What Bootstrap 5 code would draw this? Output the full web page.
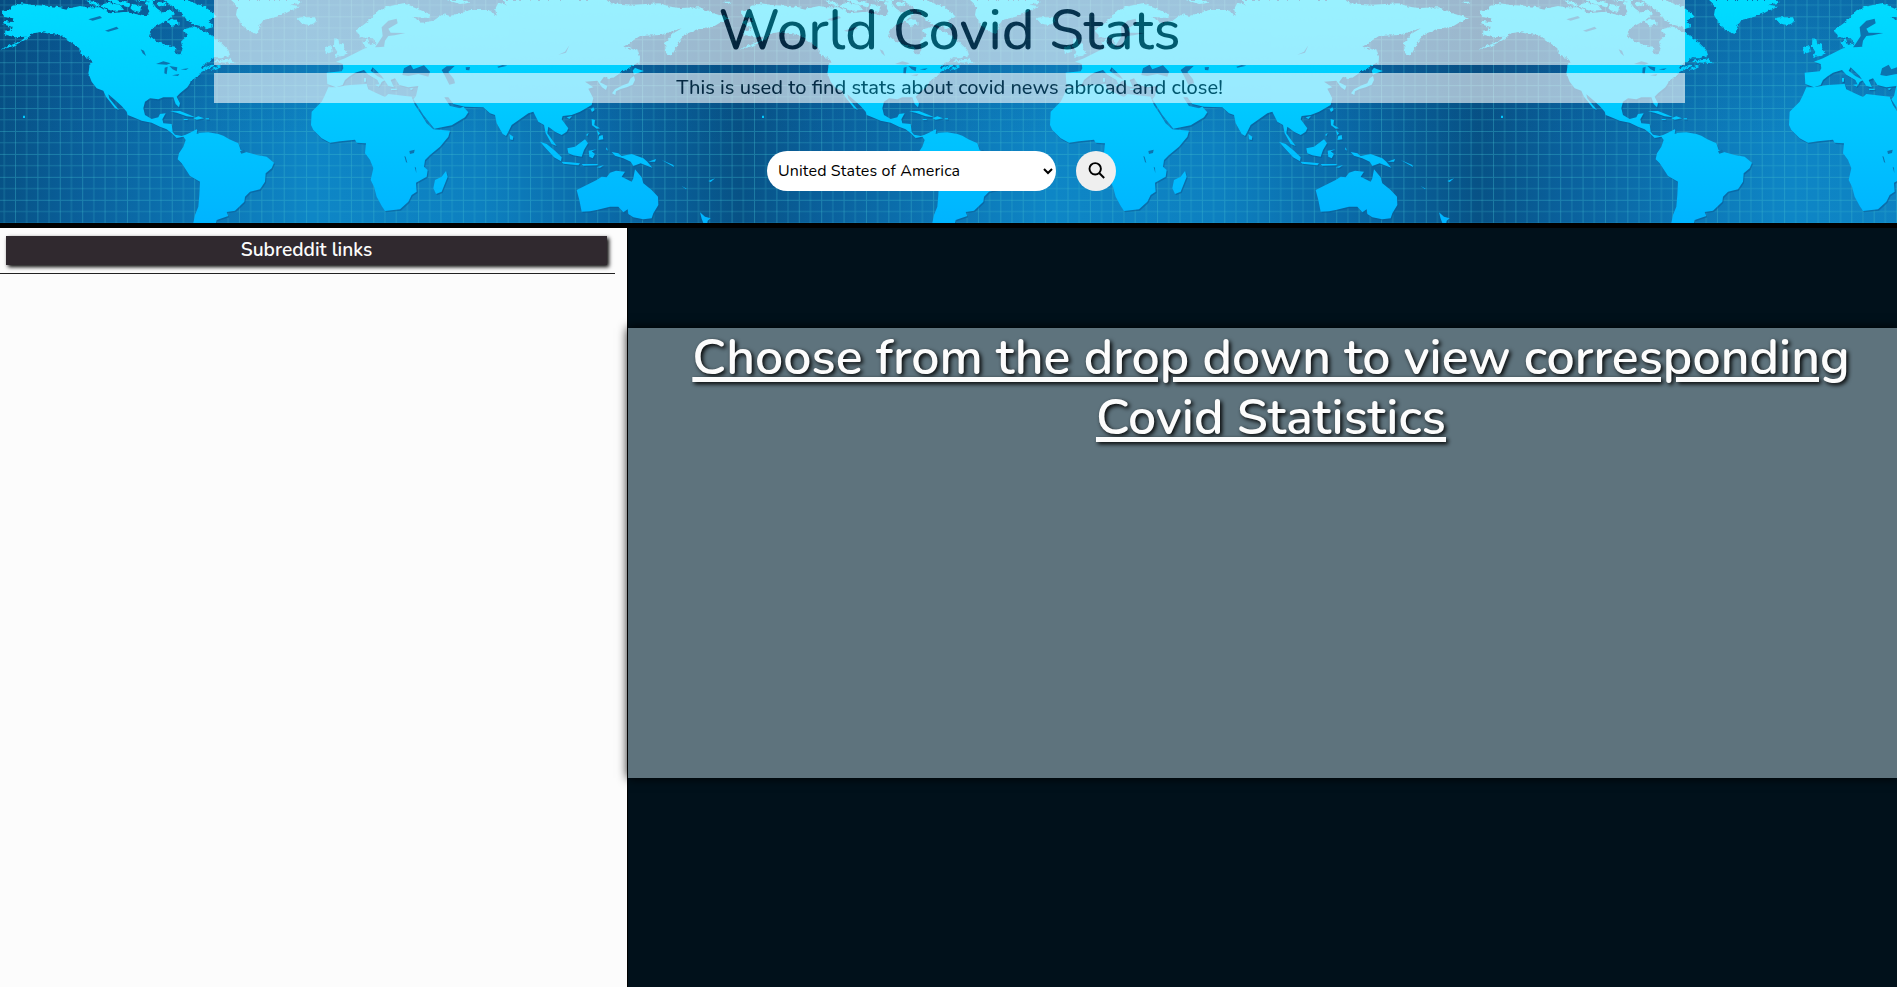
<!DOCTYPE html>
<html lang="en">
<head>
<meta charset="utf-8">
<title>World Covid Stats</title>
<meta name="viewport" content="width=device-width, initial-scale=1">
<link href="https://cdn.jsdelivr.net/npm/bootstrap@5.3.0/dist/css/bootstrap.min.css" rel="stylesheet">
<style>
body{font-family:Nunito,Lato,sans-serif;background:#01111b;color:#020a10;height:987px}
.site-header{height:228px;border-bottom:5px solid #000}
.map-bg{z-index:0}
.header-content{z-index:1;width:1471px;margin-left:214px}
.site-title{font-size:56px;line-height:62px;height:65px;margin:0 0 8px;font-weight:500;background:#fff;opacity:.6}
.tagline{font-size:20px;line-height:30px;height:30px;font-weight:500;background:#fff;opacity:.6}
.search-row{margin-top:48px;padding-left:553px;gap:20px}
.country{width:289px;height:40px;border:0;border-radius:20px;padding-left:7px;background:#fff;color:#000;font-size:16px;letter-spacing:.13px}
.search-btn{width:40px;height:40px;background:#efefef}
.side{width:627px;background:#fcfcfc;padding-top:8px}
.side-title{width:601px;height:29px;margin-left:6px;background:#30292f;color:#fcfcfc;font-size:19.2px;line-height:28px;font-weight:600;box-shadow:2px 2px 4px #000}
.side-rule{width:615px;height:1px;background:#222;margin-top:8px}
.main-pane{border-left:1px solid #000;padding-top:100px}
.stats{height:450px;background:#5e737d;box-shadow:0 0 10px #000;padding-left:17px}
.stats h2{font-size:50px;line-height:60px;font-weight:600;color:#fcfcfc;text-shadow:2px 2px 4px #000;text-decoration:underline;text-decoration-thickness:5px;text-underline-offset:3px}
</style>
</head>
<body class="d-flex flex-column overflow-hidden">
<header class="site-header position-relative flex-shrink-0">
<svg class="map-bg position-absolute top-0 start-0" width="1897" height="223" viewBox="0 0 5691 669">
<defs>
<linearGradient id="sea"><stop offset="0" stop-color="#075286"/><stop offset=".12" stop-color="#0a619d"/><stop offset=".28" stop-color="#0c76b5"/><stop offset=".42" stop-color="#0e86c6"/><stop offset=".65" stop-color="#0d80c0"/><stop offset=".82" stop-color="#0a6aa8"/><stop offset="1" stop-color="#075286"/></linearGradient>
<linearGradient id="shade" x2="0" y2="1"><stop offset="0" stop-color="#083c74" stop-opacity=".32"/><stop offset=".65" stop-color="#083c74" stop-opacity="0"/></linearGradient>
<linearGradient id="land" gradientUnits="userSpaceOnUse" x1="0" y1="0" x2="0" y2="669"><stop offset="0" stop-color="#00dcff"/><stop offset="1" stop-color="#00b4ff"/></linearGradient>
<pattern id="grid" x="45" y="49" width="67.18" height="68.8" patternUnits="userSpaceOnUse"><path d="M0 1.5H68M1.5 0V69" stroke="#3fc0d0" stroke-width="3" stroke-opacity=".36"/><path d="M0 35.5H68M35 0V69" stroke="#3fc0d0" stroke-width="3" stroke-opacity=".28"/></pattern>
<filter id="rough" x="-2%" y="-5%" width="104%" height="110%"><feTurbulence type="fractalNoise" baseFrequency=".09" numOctaves="3" seed="4"/><feDisplacementMap in="SourceGraphic" scale="12" xChannelSelector="R" yChannelSelector="G"/></filter>
<g id="north">
<path d="M5 32L30 28 38 18 65 10 100 15 150 18 180 22 200 26 240 18 262 22 300 22 330 40 370 36 400 40 430 48 450 42 445 25 436 8 455 5 470 25 490 38 510 28 525 42 505 58 475 75 455 85 447 105 470 125 500 135 525 140 527 158 540 165 548 145 543 125 560 108 552 88 575 82 600 88 625 100 642 112 660 125 685 150 690 165 665 175 640 175 612 192 600 208 635 194 650 196 605 215 598 225 575 240 400 250 267 226 268 195 278 188 262 172 240 160 238 145 215 128 195 115 180 105 150 102 125 96 100 100 75 120 40 138 2 150 30 135 60 125 78 110 45 112 20 105 10 95 32 92 35 80 5 72 15 63 38 66 40 55 8 50Z"/>
<path d="M255 0L290 8 302 18 282 16ZM300 15L325 8 360 15 372 30 340 32 312 26ZM320 0H350L390 10 384 22 350 12ZM395 12L425 18 420 36 395 30ZM400 0H470L455 6ZM470 5L500 8 490 22 475 18ZM490 0H560L590 12 615 20 640 40 650 50 625 62 640 78 620 84 580 72 560 60 548 42 520 20ZM500 62L525 58 540 72 515 78ZM640 185L665 178 690 176 705 190 680 188ZM655 198L668 196 645 208 630 210Z"/>
<path d="M690 0L712 20 708 45 725 75 745 92 770 102 778 80 790 60 830 50 860 38 900 18 870 14 905 8 895 0ZM890 54L905 52 945 52 950 65 925 76 905 70Z"/>
<path d="M1070 90L1110 60 1130 35 1160 20 1210 10 1240 22 1290 42 1285 54 1240 50 1265 68 1300 62 1330 42 1350 48 1410 30 1470 30 1482 46 1492 50 1485 28 1495 8 1520 14 1510 0H1820L1830 10 1900 14 1980 10 2010 20 2040 24 2100 22 2140 40 2190 55 2165 65 2140 80 2100 85 2060 100 2035 130 2015 167 1998 160 1995 130 2020 100 2045 85 1980 105 1920 108 1870 140 1910 150 1918 185 1860 220 1830 235 1810 230 1600 270 1250 230 1200 180 1170 150 1150 138 1120 148 1095 145 1090 125 1103 118 1110 135 1130 130 1115 115 1080 112ZM1340 0H1395L1412 8 1380 12ZM1003 115L1015 118 1018 130 1030 135 1035 152 1045 160 1030 168 1005 170 1012 155 1002 140ZM975 140L995 135 998 155 978 162ZM2170 5H2195L2185 12ZM1912 146L1920 170 1918 192 1910 180Z"/>
</g>
<g id="south">
<path d="M268 205L595 205 598 225 575 235 570 250 562 262 540 280 530 290 540 310 537 322 527 312 520 292 490 292 475 298 450 295 435 305 430 325 435 345 455 357 475 352 480 342 497 340 487 358 490 370 515 372 518 395 525 404 545 408 557 404 570 398 590 388 597 398 625 397 655 402 670 407 688 418 715 430 722 450 735 455 770 465 800 470 822 488 815 505 797 520 795 545 780 568 750 575 735 590 733 605 705 632 680 636 685 648 650 660 648 669H580L585 645 595 620 598 585 600 545 570 528 545 490 533 478 537 460 550 440 557 420 550 410 530 414 515 400 500 388 480 380 455 368 425 362 400 352 383 345 380 335 365 318 345 300 325 283 328 295 342 312 357 330 345 325 330 305 318 290 310 272 290 265 275 245 265 220Z"/>
<path d="M510 334L540 333 570 345 585 352 560 349 530 338ZM580 355L595 349 612 355 590 359ZM551 357H563V360H551ZM617 355H627V358H617ZM69 347H75V354H69Z"/>
<path d="M985 262L1005 262 1050 255 1100 252 1105 268 1130 280 1155 291 1165 282 1235 290 1245 315 1265 345 1280 370 1300 388 1350 392 1345 410 1320 440 1290 465 1275 480 1272 500 1283 510 1280 530 1248 548 1250 575 1235 585 1225 605 1200 628 1155 633 1145 618 1130 590 1122 560 1112 540 1120 505 1110 480 1095 460 1098 430 1070 428 1065 419 1020 424 990 428 965 415 940 390 933 375 935 335 950 320 965 305 975 285ZM1338 513L1343 530 1325 575 1308 582 1300 565 1305 540 1325 530Z"/>
<path d="M980 218L1025 214 1030 205 1028 192 1008 185 1035 175 1065 160 1095 145 1150 140 1300 120 1860 200 1860 220 1840 233 1812 230 1800 247 1822 258 1818 270 1806 262 1792 242 1755 245 1780 262 1765 266 1780 295 1775 315 1740 335 1715 345 1688 348 1685 358 1705 385 1700 395 1685 405 1665 395 1645 380 1642 400 1670 438 1655 432 1637 400 1632 375 1615 365 1600 335 1585 340 1535 375 1525 395 1518 408 1508 402 1490 370 1485 345 1470 340 1450 322 1395 320 1360 312 1345 292 1333 292 1350 318 1380 325 1390 320 1405 337 1395 352 1355 376 1303 386 1270 345 1240 298 1248 288 1255 258 1225 262 1198 255 1185 235 1172 240 1182 262 1165 258 1145 228 1118 202 1112 212 1132 228 1155 240 1145 246 1140 256 1132 240 1105 224 1092 210 1065 218 1050 228 1035 240 1028 255 1008 262 982 252Z"/>
<path d="M1125 254L1140 253 1136 260ZM1092 234H1098V245H1092ZM1173 266H1190V270H1173ZM1228 266L1240 263 1234 270ZM1528 402L1540 410 1538 420 1530 418ZM1700 352L1716 348 1708 357ZM1780 322L1784 330 1776 336 1772 328Z"/>
<path d="M1905 203L1915 208 1932 213 1912 220 1902 224 1898 212ZM1902 228L1905 240 1898 254 1880 262 1862 267 1848 274 1846 285 1836 280 1845 268 1870 255 1885 250 1892 235ZM1775 357L1785 360 1783 375 1800 385 1790 386 1776 376ZM1790 390L1800 400 1795 406ZM1798 408L1808 405 1810 418 1795 420ZM1758 405L1766 398 1762 408Z"/>
<path d="M1620 425L1640 432 1665 452 1685 472 1683 484 1662 472 1640 448ZM1684 485L1710 487 1740 490 1735 496 1690 491ZM1745 492L1795 492 1790 496 1750 497ZM1790 502L1812 495 1800 503ZM1702 445L1725 440 1755 418 1764 430 1752 450 1745 470 1720 466 1705 460ZM1766 452L1790 448 1775 454 1785 462 1778 475 1768 470ZM1820 442L1824 452 1818 448ZM1835 456L1855 460 1865 468 1895 462 1930 475 1942 485 1957 503 1935 495 1922 490 1900 498 1892 485 1870 475 1845 467ZM1945 485L1968 477 1965 485ZM1985 480L2020 495 2022 501ZM2045 558L2060 566 2058 568ZM2125 543L2145 535 2132 546ZM2100 637L2115 650 2132 655 2123 662 2122 669H2110L2105 656Z"/>
<path d="M1730 570L1760 555 1790 540 1805 530 1820 532 1830 518 1848 512 1875 515 1865 530 1895 545 1900 535 1905 508 1915 520 1925 532 1930 550 1955 570 1974 590 1975 615 1960 640 1955 655 1930 658 1900 652 1885 642 1883 628 1870 637 1855 620 1830 620 1790 630 1770 634 1745 635 1738 600Z"/>
</g>
<g id="lakes">
<path d="M468 192L490 184 512 190 500 194ZM494 203L503 200 500 223 493 220ZM508 198L532 202 530 214 518 208ZM516 226L538 222 534 228ZM542 208L566 205 558 210ZM265 58L300 48 306 54 278 62ZM315 92L350 80 356 86 325 95ZM422 148L432 152 438 168 428 160Z"/>
<path d="M1207 225L1212 205 1232 194 1240 208 1272 196 1290 215 1285 230 1255 222 1225 228ZM1325 210L1340 199 1364 198 1345 216 1362 238 1365 250 1348 254 1335 228ZM1397 202L1410 201 1408 211 1398 210ZM1492 200L1508 195 1522 197 1495 203ZM1675 164L1695 155 1708 136 1698 158ZM1228 453L1244 449 1242 459 1230 462ZM1213 468L1217 470 1222 489 1218 486ZM1244 500L1248 503 1249 520ZM592 388L597 400 590 402ZM720 454L732 449 738 457 724 461Z"/>
<path d="M1145 82L1165 62 1190 56 1193 70 1165 86 1172 98 1216 99 1184 106 1165 108 1155 122 1152 140 1125 142 1134 130 1148 108Z"/>
</g>
<g id="tile">
<path fill="url(#sea)" d="M0 0H2218V669H0z"/><path fill="url(#shade)" d="M0 0H2218V669H0z"/><path fill="url(#grid)" d="M0 0H2217V669H0z"/>
<g fill="#075b96" opacity=".55" transform="translate(3 4)"><use href="#south"/></g>
<g fill="url(#land)"><use href="#south"/><use href="#north" filter="url(#rough)"/></g>
<use href="#lakes" fill="#0b74b0"/>
</g>
</defs>
<use href="#tile"/><use href="#tile" x="2217"/><use href="#tile" x="4434"/>
</svg>
<div class="header-content position-relative">
<h1 class="site-title text-center">World Covid Stats</h1>
<p class="tagline text-center m-0">This is used to find stats about covid news abroad and close!</p>
<form class="search-row d-flex align-items-center">
<select class="country" aria-label="Country"><option>United States of America</option></select>
<button class="search-btn btn rounded-circle border-0 p-0 d-flex align-items-center justify-content-center" type="button" aria-label="Search">
<svg width="18" height="18" viewBox="0 0 18 18" fill="none" stroke="#000" stroke-width="1.9"><circle cx="8.2" cy="6.8" r="5.7"/><path d="M12.2 11L17.2 16"/></svg>
</button>
</form>
</div>
</header>
<main class="d-flex flex-grow-1">
<aside class="side flex-shrink-0">
<div class="side-title text-center">Subreddit links</div>
<div class="side-rule"></div>
</aside>
<section class="main-pane flex-grow-1">
<div class="stats text-center"><h2 class="m-0">Choose from the drop down to view corresponding<br>Covid Statistics</h2></div>
</section>
</main>
<script src="https://cdn.jsdelivr.net/npm/bootstrap@5.3.0/dist/js/bootstrap.bundle.min.js"></script>
</body>
</html>
